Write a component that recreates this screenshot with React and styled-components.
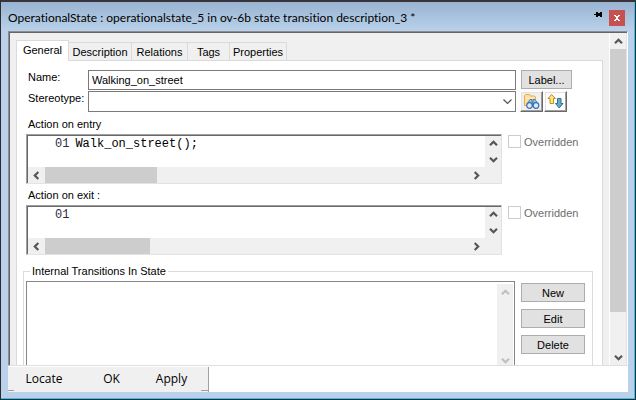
import React, { useState } from "react";
import styled, { createGlobalStyle } from "styled-components";

const ui = '"Liberation Sans", Arial, sans-serif';
const caption = '"Open Sans", "Noto Sans", sans-serif';
const mono = '"Liberation Mono", "Courier New", monospace';

const GlobalStyle = createGlobalStyle`
  *, *::before, *::after { box-sizing: border-box; }
  body { margin: 0; background: #b9d1ea; color: #000; font: 11px/14px ${ui}; }
  button, input, select, textarea { font: inherit; color: inherit; margin: 0; padding: 0; border-radius: 0; }
`;

const Window = styled.main`
  display: flex;
  flex-direction: column;
  height: 100vh;
  border: 1px solid #2b2b30;
  border-top: 2px solid #38343a;
  background: #b9d1ea;
  box-shadow: inset -1px -1px 0 #35c4f0;
`;

const TitleBar = styled.header`
  display: flex;
  flex: none;
  align-items: center;
  gap: 4px;
  height: 29px;
  margin-right: 1px;
  padding: 6px 9px 4px 7px;
  background: linear-gradient(#99b4d1, #b9d1ea);
`;

const Title = styled.h1`
  flex: 1;
  margin: 0;
  overflow: hidden;
  white-space: nowrap;
  font: 12px/16px Lato, ${caption};
  font-variant-ligatures: none;
`;

const PinButton = styled.button`
  display: flex;
  align-items: flex-start;
  width: 11px;
  height: 13px;
  border: 0;
  background: none;
`;

const CloseButton = styled.button`
  display: grid;
  place-items: center;
  width: 16px;
  height: 16px;
  border: 0;
  background: #c75050;
`;

const Client = styled.section`
  display: flex;
  flex: 1;
  flex-direction: column;
  min-height: 0;
  margin: 0 7px;
  margin-bottom: 7px;
  background: #fff;
`;

const Viewport = styled.div`
  display: flex;
  flex: 1;
  min-height: 0;
  border: 1px solid #8e8e92;
  border-right-color: #fff;
  border-bottom-color: #dfdfdf;
  background: #f0f0f0;
  box-shadow: inset 1px 1px 0 #656569, inset -1px 0 0 #e3e3e3;
  padding: 1px 1px 0 1px;
`;

const Scrolled = styled.div`
  flex: 1;
  min-width: 0;
  overflow: hidden;
  padding: 7px 6px 0;
`;

const TabList = styled.div`
  display: flex;
  align-items: flex-end;
  height: 20px;
`;

const Tab = styled.button`
  width: ${(p) => p.$width}px;
  height: ${(p) => (p.$active ? 21 : 18)}px;
  margin-bottom: ${(p) => (p.$active ? -1 : 0)}px;
  padding-bottom: ${(p) => (p.$active ? 2 : 0)}px;
  border: 1px solid #dadada;
  border-bottom: 0;
  border-left-width: ${(p) => (p.$active ? 1 : 0)}px;
  background: ${(p) => (p.$active ? "#fff" : "#f0f0f0")};
`;

const Page = styled.div`
  height: 500px;
  border: 1px solid #dadada;
  background: #fff;
`;

const Form = styled.div`
  padding: 9px 17px 0 9px;
`;

const Field = styled.div`
  display: grid;
  grid-template-columns: 62px 1fr 69px;
  height: ${(p) => p.$height}px;
  margin-bottom: ${(p) => p.$after}px;
`;

const Label = styled.label`
  display: block;
  padding-left: 2px;
`;

const TextInput = styled.input`
  width: 100%;
  height: 20px;
  padding: 0 3px;
  border: 1px solid #7a7a7a;
  background: #fff;
`;

const ComboFrame = styled.div`
  position: relative;
  svg {
    position: absolute;
    right: 4px;
    top: 7px;
    pointer-events: none;
  }
`;

const Combo = styled.select`
  width: 100%;
  height: 21px;
  padding: 0 3px;
  appearance: none;
  border: 1px solid #7a7a7a;
  background: #fff;
`;

const Side = styled.div`
  display: flex;
  gap: 1px;
  padding-left: ${(p) => p.$inset}px;
`;

const PushButton = styled.button`
  width: ${(p) => p.$width}px;
  height: 19px;
  border: 1px solid #adadad;
  background: #e1e1e1;
`;

const IconButton = styled.button`
  display: grid;
  place-items: center;
  width: 23px;
  height: 21px;
  border: 1px solid #fff;
  border-right: 1px solid #696969;
  border-bottom: 1px solid #696969;
  background: ${(p) => p.$fill};
  box-shadow: inset -1px -1px 0 #a0a0a0, inset 1px 1px 0 #e3e3e3;
`;

const EditorLabel = styled(Label)`
  margin-bottom: 3px;
`;

const EditorRow = styled.div`
  display: grid;
  grid-template-columns: 1fr 77px;
  gap: 6px;
  margin-bottom: ${(p) => p.$after}px;
`;

const Editor = styled.div`
  display: grid;
  grid-template-columns: 1fr 16px;
  grid-template-rows: 31px 16px;
  height: 50px;
  border: 1px solid #a0a0a0;
  border-right-color: #e3e3e3;
  border-bottom-color: #e3e3e3;
  background: #f0f0f0;
  box-shadow: inset 1px 1px 0 #696969;
  padding: 1px 0 0 1px;
`;

const CodeArea = styled.div`
  display: flex;
  gap: 6px;
  padding-left: 27px;
  background: #fff;
  font: 12px/17px ${mono};
`;

const LineNumber = styled.span`
  color: #302848;
`;

const Code = styled.textarea`
  flex: 1;
  min-width: 0;
  height: 31px;
  padding: 0;
  overflow: hidden;
  resize: none;
  border: 0;
  background: transparent;
`;

const Check = styled.label`
  display: flex;
  align-items: flex-start;
  gap: 3px;
  height: 14px;
  color: #6d6d6d;
  margin-top: 1px;
  input {
    width: 13px;
    height: 13px;
    appearance: none;
    border: 1px solid #cccccc;
    background: #fff;
  }
`;

const ScrollBar = styled.div`
  display: flex;
  flex-direction: ${(p) => (p.$horizontal ? "row" : "column")};
  justify-content: space-between;
  flex: none;
  background: #f0f0f0;
  ${(p) => (p.$horizontal ? "height: 16px;" : "width: 16px;")}
  ${(p) => p.$edge && "border-left: 1px solid #fff; width: 17px;"}
`;

const ArrowButton = styled.button`
  display: grid;
  place-items: center;
  flex: none;
  width: ${(p) => p.$width || 16}px;
  height: ${(p) => p.$height || 16}px;
  border: 0;
  background: transparent;
  color: ${(p) => (p.$dim ? "#bfbfbf" : "#565656")};
`;

const Track = styled.div`
  flex: 1;
  min-width: 0;
  min-height: 0;
`;

const Thumb = styled.div`
  background: #cdcdcd;
`;

const Group = styled.fieldset`
  display: block;
  min-width: 0;
  height: 140px;
  margin: 0 9px 0 6px;
  padding: 3px 7px 0 2px;
  border: 1px solid #dcdcdc;
`;

const Legend = styled.legend`
  margin-left: 4px;
  padding: 0 2px;
`;

const GroupBody = styled.div`
  display: flex;
  gap: 6px;
`;

const ListFrame = styled.div`
  display: flex;
  flex: 1;
  min-width: 0;
  height: 90px;
  padding: 2px 1px;
  border: 1px solid #828790;
`;

const List = styled.select`
  flex: 1;
  min-width: 0;
  appearance: none;
  border: 0;
  background: #fff;
  overflow: hidden;
`;

const Buttons = styled.div`
  display: flex;
  flex-direction: column;
  gap: 7px;
  padding-top: 2px;
`;

const Footer = styled.footer`
  display: flex;
  flex: none;
  height: 26px;
  padding-top: 1px;
`;

const Commands = styled.div`
  display: flex;
  width: 201px;
  padding-bottom: 1px;
  border-right: 1px solid #a0a0a0;
  background:
    linear-gradient(#a0a0a0, #a0a0a0) left bottom 1px / 6px 1px no-repeat,
    linear-gradient(#a0a0a0, #a0a0a0) right bottom 1px / 7px 1px no-repeat,
    #f0f0f0;
`;

const Command = styled.button`
  width: ${(p) => p.$width}px;
  border: 0;
  background: transparent;
  font: 12px/16px ${caption};
`;

const turns = { up: 0, right: 90, down: 180, left: 270 };

function Arrow({ to }) {
  return (
    <svg width="9" height="9" viewBox="0 0 9 9" aria-hidden="true">
      <path
        d="M1 6.3 4.5 2.8 8 6.3"
        fill="none"
        stroke="currentColor"
        strokeWidth="2.2"
        transform={`rotate(${turns[to]} 4.5 4.5)`}
      />
    </svg>
  );
}

function VerticalBar({ thumb, dim, edge, arrowHeight, name }) {
  return (
    <ScrollBar $edge={edge}>
      <ArrowButton type="button" $dim={dim} $height={arrowHeight} aria-label={`${name} up`}>
        <Arrow to="up" />
      </ArrowButton>
      {thumb && (
        <Track>
          <Thumb style={{ height: thumb }} />
        </Track>
      )}
      <ArrowButton type="button" $dim={dim} $height={arrowHeight} aria-label={`${name} down`}>
        <Arrow to="down" />
      </ArrowButton>
    </ScrollBar>
  );
}

function HorizontalBar({ thumb, name }) {
  return (
    <ScrollBar $horizontal>
      <ArrowButton type="button" $width={17} aria-label={`${name} left`}>
        <Arrow to="left" />
      </ArrowButton>
      <Track>
        <Thumb style={{ width: thumb, height: "100%" }} />
      </Track>
      <ArrowButton type="button" $width={17} aria-label={`${name} right`}>
        <Arrow to="right" />
      </ArrowButton>
    </ScrollBar>
  );
}

function CodeEditor({ id, label, value, thumb, after }) {
  return (
    <>
      <EditorLabel htmlFor={id}>{label}</EditorLabel>
      <EditorRow $after={after}>
        <Editor>
          <CodeArea>
            <LineNumber>01</LineNumber>
            <Code id={id} defaultValue={value} spellCheck={false} />
          </CodeArea>
          <VerticalBar arrowHeight={15} name={label} />
          <HorizontalBar thumb={thumb} name={label} />
        </Editor>
        <Check>
          <input type="checkbox" disabled />
          Overridden
        </Check>
      </EditorRow>
    </>
  );
}

function PinIcon() {
  return (
    <svg width="9" height="7" viewBox="0 0 9 7" shapeRendering="crispEdges" aria-hidden="true">
      <path d="M0 3h3v1H0zM2 1h2v5H2zM4 2h3v3H4zM6 1h2v5H6z" fill="#000" />
    </svg>
  );
}

function CloseIcon() {
  return (
    <svg width="6" height="6" viewBox="0 0 6 6" shapeRendering="crispEdges" aria-hidden="true">
      <path d="M0 0h2v1H0zM4 0h2v1H4zM1 1h4v1H1zM2 2h2v2H2zM1 4h4v1H1zM0 5h2v1H0zM4 5h2v1H4z" fill="#fff" />
    </svg>
  );
}

function FolderFindIcon() {
  return (
    <svg width="17" height="17" viewBox="0 0 17 17" aria-hidden="true">
      <path d="M1.500 12.500v-10l1-1h4l1 1.500h4l1 1v8.500z" fill="#fddfa0" stroke="#e5ab50" />
      <path d="M2.500 5h9" stroke="#fff0c4" />
      <path d="M4 11.500 7 6.500h2v3h1v-3h2l3.500 5z" fill="#9dc3e8" stroke="#4a7db8" />
      <circle cx="6.500" cy="12.500" r="2.800" fill="#d8ecfc" stroke="#3a70b0" strokeWidth="1.200" />
      <circle cx="13" cy="12.500" r="2.800" fill="#d8ecfc" stroke="#3a70b0" strokeWidth="1.200" />
      <path d="M9 11.500h1.500" stroke="#3a70b0" strokeWidth="2" />
    </svg>
  );
}

function SwapIcon() {
  return (
    <svg width="17" height="17" viewBox="0 0 17 17" aria-hidden="true">
      <path d="M4.500 1.500 8.500 5.500H6.500v5h-3.500v-5h-2z" fill="#ffe48a" stroke="#c0901c" />
      <path d="M10.500 5.500h3.500v5h2L12.200 15 8.500 10.500h2z" fill="#6aaac6" stroke="#33708f" />
    </svg>
  );
}

const tabs = [
  ["General", 53],
  ["Description", 63],
  ["Relations", 56],
  ["Tags", 42],
  ["Properties", 57],
];

export default function App() {
  const [active, setActive] = useState("General");
  return (
    <>
      <GlobalStyle />
      <Window>
        <TitleBar>
          <Title>OperationalState : operationalstate_5 in ov-6b state transition description_3 *</Title>
          <PinButton type="button" aria-label="Pin">
            <PinIcon />
          </PinButton>
          <CloseButton type="button" aria-label="Close">
            <CloseIcon />
          </CloseButton>
        </TitleBar>
        <Client>
          <Viewport>
            <Scrolled>
              <TabList role="tablist">
                {tabs.map(([name, width]) => (
                  <Tab
                    key={name}
                    type="button"
                    role="tab"
                    aria-selected={name === active}
                    $active={name === active}
                    $width={width}
                    onClick={() => setActive(name)}
                  >
                    {name}
                  </Tab>
                ))}
              </TabList>
              <Page>
                <Form>
                  <Field $height={20} $after={1}>
                    <Label htmlFor="name">Name:</Label>
                    <TextInput id="name" defaultValue="Walking_on_street" spellCheck={false} />
                    <Side $inset={5}>
                      <PushButton type="button" $width={51}>
                        Label...
                      </PushButton>
                    </Side>
                  </Field>
                  <Field $height={21} $after={5}>
                    <Label htmlFor="stereotype">Stereotype:</Label>
                    <ComboFrame>
                      <Combo id="stereotype" defaultValue="">
                        <option value="" />
                      </Combo>
                      <svg width="9" height="7" viewBox="0 0 9 7" aria-hidden="true">
                        <path d="M.5 1.500 4.500 5.500 8.500 1.500" fill="none" stroke="#505050" strokeWidth="1.200" />
                      </svg>
                    </ComboFrame>
                    <Side $inset={4}>
                      <IconButton type="button" $fill="#f0f0f0" aria-label="Find stereotype">
                        <FolderFindIcon />
                      </IconButton>
                      <IconButton type="button" $fill="#fff" aria-label="Change order">
                        <SwapIcon />
                      </IconButton>
                    </Side>
                  </Field>
                  <CodeEditor id="entry" label="Action on entry" value="Walk_on_street();" thumb="112px" after={4} />
                  <CodeEditor id="exit" label="Action on exit :" value="" thumb="105px" after={9} />
                </Form>
                <Group>
                  <Legend>Internal Transitions In State</Legend>
                  <GroupBody>
                    <ListFrame>
                      <List size={6} aria-label="Internal Transitions In State" />
                      <VerticalBar dim name="List" />
                    </ListFrame>
                    <Buttons>
                      <PushButton type="button" $width={64}>New</PushButton>
                      <PushButton type="button" $width={64}>Edit</PushButton>
                      <PushButton type="button" $width={64}>Delete</PushButton>
                    </Buttons>
                  </GroupBody>
                </Group>
              </Page>
            </Scrolled>
            <VerticalBar thumb="263px" edge name="Page" />
          </Viewport>
          <Footer>
            <Commands>
              <Command type="button" $width={72}>Locate</Command>
              <Command type="button" $width={63}>OK</Command>
              <Command type="button" $width={57}>Apply</Command>
            </Commands>
          </Footer>
        </Client>
      </Window>
    </>
  );
}
